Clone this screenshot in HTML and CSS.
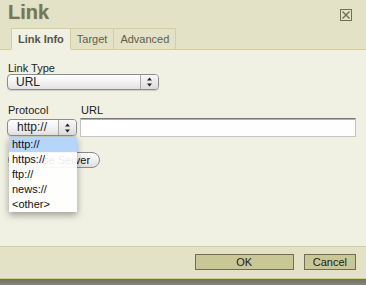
FILE: index.html
```html
<!DOCTYPE html>
<html lang="en">
<head>
<meta charset="UTF-8">
<meta name="viewport" content="width=device-width, initial-scale=1.0">
<title>Link</title>
<link rel="stylesheet" href="styles.css">
</head>
<body>

<div class="dialog">
  <header class="titlebar">
    <h1>Link</h1>
    <span class="close" title="Close">
      <svg width="10" height="10" viewBox="0 0 10 10">
        <path d="M1.5 1.5 L8.5 8.5 M8.5 1.5 L1.5 8.5" stroke="#6f6f52" stroke-width="1.4" fill="none"/>
      </svg>
    </span>
  </header>

  <nav class="tabs">
    <a class="tab active">Link Info</a>
    <a class="tab">Target</a>
    <a class="tab">Advanced</a>
  </nav>

  <main class="content">
    <label class="field-label">Link Type</label>
    <div class="select select-wide">
      <span class="select-value">URL</span>
      <span class="select-arrows">
        <svg width="7" height="10" viewBox="0 0 7 10">
          <path d="M3.5 0.5 L6 3.5 L1 3.5 Z M3.5 9.5 L6 6.5 L1 6.5 Z" fill="#222"/>
        </svg>
      </span>
    </div>

    <div class="row">
      <div class="col col-protocol">
        <label class="field-label">Protocol</label>
        <div class="select select-small">
          <span class="select-value">http://</span>
          <span class="select-arrows">
            <svg width="7" height="10" viewBox="0 0 7 10">
              <path d="M3.5 0.5 L6 3.5 L1 3.5 Z M3.5 9.5 L6 6.5 L1 6.5 Z" fill="#222"/>
            </svg>
          </span>
        </div>
      </div>
      <div class="col col-url">
        <label class="field-label">URL</label>
        <input class="text-input" type="text">
      </div>
    </div>

    <button class="pill-button">Browse Server</button>

    <ul class="dropdown">
      <li class="selected">http://</li>
      <li>https://</li>
      <li>ftp://</li>
      <li>news://</li>
      <li>&lt;other&gt;</li>
    </ul>
  </main>

  <footer class="footer">
    <button class="btn btn-ok">OK</button>
    <button class="btn">Cancel</button>
  </footer>
  <div class="shadow"></div>
</div>

</body>
</html>
```

FILE: styles.css
```css
:root {
  --header-bg: #e3e1c6;
  --content-bg: #f0f0e3;
  --line: #d3cf9f;
  --title: #777758;
  --text: #222;
}

* {
  box-sizing: border-box;
}

body {
  margin: 0;
  font-family: 'Liberation Sans', Arial, sans-serif;
  font-size: 11px;
  color: var(--text);
  background: var(--header-bg);
}

.dialog {
  display: flex;
  flex-direction: column;
  height: 285px;
}

.titlebar {
  display: flex;
  justify-content: space-between;
  padding: 1px 14px 0 8px;
}

.titlebar h1 {
  margin: 0;
  font-size: 20px;
  line-height: 23px;
  font-weight: bold;
  color: var(--title);
  text-shadow: 0 0 1px rgba(120, 120, 90, 0.4);
}

.close {
  display: flex;
  align-items: center;
  justify-content: center;
  width: 12px;
  height: 12px;
  margin-top: 8px;
  border: 1px solid #6f6f52;
}

.tabs {
  display: flex;
  margin-top: 4px;
  padding-left: 11px;
  height: 22px;
  border-bottom: 1px solid var(--line);
}

.tab {
  margin-bottom: -1px;
  padding: 0 6px;
  line-height: 20px;
  color: #5e5e50;
  border: 1px solid var(--line);
  background: var(--header-bg);
}

.tab + .tab {
  border-left: none;
}

.tab.active {
  font-weight: bold;
  color: #555548;
  background: var(--content-bg);
  border-bottom-color: var(--content-bg);
}

.content {
  position: relative;
  height: 196px;
  padding: 12px 10px 0 7px;
  background: var(--content-bg);
}

.field-label {
  display: block;
  line-height: 12px;
  padding-left: 1px;
}

.select {
  display: flex;
  align-items: stretch;
  border: 1px solid #8c8c8c;
  border-radius: 4px;
  background: linear-gradient(#ffffff, #f2f2f2 50%, #e2e2e2);
  box-shadow: 0 1px 1px rgba(0, 0, 0, 0.15);
  overflow: hidden;
}

.select-wide {
  width: 152px;
  height: 16px;
}

.select-small {
  width: 70px;
  height: 17px;
  margin-top: 3px;
}

.select-value {
  flex: 1;
  padding-left: 8px;
  line-height: 14px;
  font-size: 12px;
}

.select-small .select-value {
  line-height: 15px;
  padding-left: 9px;
}

.select-arrows {
  display: flex;
  align-items: center;
  justify-content: center;
  width: 18px;
  border-left: 1px solid #a8a8a8;
  background: linear-gradient(#f8f8f8, #dcdcdc);
}

.row {
  display: flex;
  gap: 3px;
  margin-top: 14px;
}

.col-protocol {
  width: 70px;
}

.col-url {
  flex: 1;
}

.text-input {
  display: block;
  width: 100%;
  height: 19px;
  margin-top: 2px;
  border: 1px solid #c4c4c4;
  border-top-color: #7a7a7a;
  box-shadow: inset 0 1px 0 #b0b0b0;
  background: white;
}

.pill-button {
  display: block;
  margin: 15px 0 0 1px;
  width: 92px;
  height: 16px;
  padding: 0;
  border: 1px solid #8c8c8c;
  border-radius: 8px;
  background: linear-gradient(#ffffff, #f0f0f0 50%, #dedede);
  font-family: inherit;
  font-size: 11px;
  color: #111;
}

.dropdown {
  position: absolute;
  left: 9px;
  top: 87px;
  width: 68px;
  margin: 0;
  padding: 0;
  list-style: none;
  background: rgba(255, 255, 255, 0.92);
  box-shadow: 0 3px 7px rgba(0, 0, 0, 0.35);
}

.dropdown li {
  height: 15px;
  line-height: 15px;
  padding-left: 3px;
  color: #111;
}

.dropdown li.selected {
  background: #b5d5fd;
}

.footer {
  display: flex;
  justify-content: flex-end;
  gap: 10px;
  height: 33px;
  padding: 7px 10px 0 0;
  border-top: 1px solid var(--line);
  border-bottom: 1px solid #cfcb92;
  background: var(--header-bg);
}

.btn {
  height: 16px;
  padding: 0 8px;
  border: 1px solid #6f6e52;
  background: #c8c795;
  font-family: inherit;
  font-size: 11px;
  line-height: 14px;
  color: #222;
}

.btn-ok {
  width: 99px;
}

.shadow {
  flex: 1;
  background: linear-gradient(#6f6f60, #8a8a7a);
}
```
